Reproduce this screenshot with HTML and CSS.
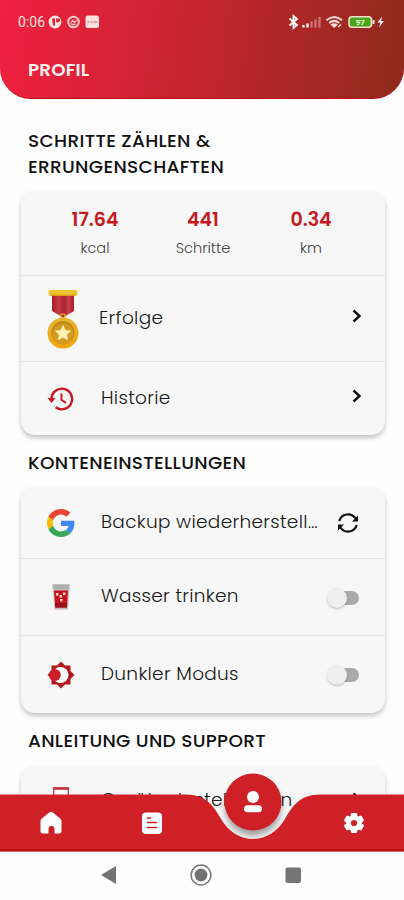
FILE: index.html
```html
<!DOCTYPE html>
<html lang="de">
<head>
<meta charset="utf-8">
<title>Profil</title>
<link rel="stylesheet" href="styles.css">
</head>
<body>
<div class="phone">
  <header class="header">
    <div class="status">
      <span class="clock">0:06</span>
      <svg class="notes" width="54" height="16" viewBox="0 0 54 16">
        <circle cx="7" cy="8" r="6.4" fill="#ffe6e4"/><path d="M4 4.500h3v7H5zM8 4.500h3.500a2 2 0 0 1-3.500 3z" fill="#df2436"/>
        <circle cx="25.500" cy="8" r="5.300" fill="none" stroke="#fbc9c8" stroke-width="2"/><path d="M22.500 9.500l2-3 2 2 2-2M23.500 10.500h4" fill="none" stroke="#fbc9c8" stroke-width="1.300"/>
        <rect x="37.500" y="1.500" width="13.500" height="12.500" rx="2" fill="#fde0df"/><path d="M39.500 8h2m1 0h2m1 0h3.500" stroke="#e0a0a2" stroke-width="2"/>
      </svg>
      <svg class="signals" width="98" height="16" viewBox="0 0 98 16">
        <path d="M1.500 4.500l7.500 6.500L5.500 14V2L9 5l-7.500 6.500" fill="none" stroke="#fff" stroke-width="1.800"/>
        <path d="M15.500 13.500v-2.500M19.500 13.500V9.500" stroke="#fff" stroke-width="2.300"/>
        <path d="M23.500 13.500V7.500M27.500 13.500V5.500M31.500 13.500V3" stroke="#cf7774" stroke-width="2.300"/>
        <g fill="none" stroke="#ffdedb" stroke-width="2"><path d="M38.500 6.200q7.500-6.500 15.500 0M41.200 9q5-4.200 10 0"/></g>
        <path d="M42.500 10.500q3.800-2.600 7.400 0L46.200 14z" fill="#ffdedb"/><path d="M50 13l3-2.500" stroke="#ffdedb" stroke-width="1.500"/>
        <rect x="61" y="2.800" width="22.500" height="10.400" rx="3" fill="#4da51c" stroke="#f4dfd0" stroke-width="1.600"/>
        <path d="M85.500 6v4" stroke="#f4dfd0" stroke-width="2"/>
        <text class="battery" x="72.300" y="10.900" text-anchor="middle">97</text>
        <path d="M94 2.500l-4.500 6h3L91 13.500l5-6.500h-3z" fill="#fff"/>
      </svg>
    </div>
    <h1 class="title">PROFIL</h1>
  </header>

  <main class="content">
    <h2 class="heading">SCHRITTE ZÄHLEN &amp;<br>ERRUNGENSCHAFTEN</h2>
    <section class="card card-steps">
      <div class="stats">
        <div class="stat"><b>17.64</b><span>kcal</span></div>
        <div class="stat"><b>441</b><span>Schritte</span></div>
        <div class="stat"><b>0.34</b><span>km</span></div>
      </div>
      <div class="row row-award">
        <svg class="medal" width="32" height="60" viewBox="0 0 32 60">
          <defs>
            <linearGradient id="gold" x2="0" y2="1"><stop stop-color="#e3b637"/><stop offset="1" stop-color="#f2a40b"/></linearGradient>
            <linearGradient id="ribbon"><stop stop-color="#a71d2c"/><stop offset=".3" stop-color="#c93b43"/><stop offset=".55" stop-color="#a82330"/><stop offset=".75" stop-color="#cc3e46"/><stop offset="1" stop-color="#a51d2b"/></linearGradient>
          </defs>
          <path d="M5 4h22v18l-11 6.500L5 22z" fill="url(#ribbon)"/>
          <rect x="1.500" y="1" width="29" height="6" rx="2.500" fill="#efc331"/><path d="M4 6.200h24" stroke="#d99d17" stroke-width="1.400"/>
          <circle cx="16" cy="27" r="2" fill="none" stroke="#dca821" stroke-width="1.500"/>
          <circle cx="16" cy="44" r="15.500" fill="url(#gold)"/>
          <circle cx="16" cy="43.700" r="11.500" fill="#be8414"/><circle cx="16" cy="44.800" r="10.600" fill="#d29a22"/>
          <path d="M16 36.500l2.300 4.800 5.300.7-3.900 3.600 1 5.200-4.700-2.500-4.700 2.500 1-5.200-3.900-3.600 5.300-.7z" fill="#fff3b4" stroke="#fff3b4" stroke-width=".6"/>
        </svg>
        <span class="label">Erfolge</span>
        <svg class="chev" width="12" height="16" viewBox="0 0 12 16"><path d="M2.500 2.500L8.500 8l-6 5.500"/></svg>
      </div>
      <div class="row row-history">
        <svg class="icon" width="28" height="26" viewBox="0 0 28 26">
          <path d="M4.500 13a10.300 10.300 0 1 1 4.200 8.300" fill="none" stroke="#ca1823" stroke-width="2.400"/><path d="M.5 12h8l-4 5z" fill="#ca1823"/><path d="M14.500 7.500v6.300l4.500 3" fill="none" stroke="#ca1823" stroke-width="2"/>
        </svg>
        <span class="label">Historie</span>
        <svg class="chev" width="12" height="16" viewBox="0 0 12 16"><path d="M2.500 2.500L8.500 8l-6 5.500"/></svg>
      </div>
    </section>

    <h2 class="heading h-account">KONTENEINSTELLUNGEN</h2>
    <section class="card card-account">
      <div class="row row-backup">
        <svg class="icon google" width="28" height="28" viewBox="0 0 48 48">
          <path fill="#ea4335" d="M24 9.500c3.540 0 6.710 1.220 9.210 3.600l6.850-6.850C35.900 2.380 30.470 0 24 0 14.620 0 6.510 5.380 2.560 13.220l7.980 6.190C12.430 13.720 17.740 9.500 24 9.500z"/>
          <path fill="#4285f4" d="M46.980 24.550c0-1.570-.15-3.090-.38-4.550H24v9.020h12.940c-.58 2.960-2.260 5.480-4.780 7.180l7.730 6c4.510-4.180 7.090-10.360 7.090-17.650z"/>
          <path fill="#fbbc05" d="M10.530 28.590c-.48-1.450-.76-2.990-.76-4.590s.27-3.140.76-4.590l-7.980-6.190C.92 16.460 0 20.120 0 24s.92 7.540 2.560 10.780z"/>
          <path fill="#34a853" d="M24 48c6.480 0 11.930-2.130 15.890-5.810l-7.730-6c-2.150 1.450-4.920 2.300-8.160 2.300-6.260 0-11.570-4.220-13.470-9.910l-7.980 6.190C6.510 42.620 14.620 48 24 48z"/>
        </svg>
        <span class="label">Backup wiederherstell…</span>
        <svg class="sync" width="24" height="22" viewBox="0 0 24 22">
          <path d="M3.300 9A9 9 0 0 1 19.500 6.500M20.700 13A9 9 0 0 1 4.500 15.500" fill="none" stroke="#111" stroke-width="2.200"/><path d="M22 3.500v6h-6zM2 18.500v-6h6z" fill="#111"/>
        </svg>
      </div>
      <div class="row row-water">
        <svg class="icon" width="28" height="28" viewBox="0 0 28 28">
          <path d="M5.500 1.500h17l-1.500 25H7.500z" fill="#c7b9b8"/><path d="M5.500 1.500h17l-.3 4.500H5.800z" fill="#aeb0ae"/><path d="M7 7.500h14l-1.100 17H8.300z" fill="#c8131f"/><path d="M8 20h12.200l-.3 4.500H8.300z" fill="#99131a"/>
          <path d="M9 10h2.500v2.500H9zM16 9.500h2.500V12H16zM12.500 12H15v2.500h-2.500zM13 16h2.500v2.500H13z" fill="#f9d5d5"/>
        </svg>
        <span class="label">Wasser trinken</span>
        <span class="switch"></span>
      </div>
      <div class="row row-dark">
        <svg class="icon" width="28" height="28" viewBox="0 0 28 28">
          <path d="M14 .5l4 4h5.500V10l4 4-4 4v5.500H18l-4 4-4-4H4.500V18l-4-4 4-4V4.500H10z" fill="#b31720"/>
          <circle cx="13.500" cy="14" r="8" fill="#fff"/>
          <circle cx="7.800" cy="14" r="6" fill="#cf1c2a"/>
        </svg>
        <span class="label">Dunkler Modus</span>
        <span class="switch"></span>
      </div>
    </section>

    <h2 class="heading h-support">ANLEITUNG UND SUPPORT</h2>
    <section class="card card-support">
      <div class="row row-device">
        <svg class="icon" width="28" height="30" viewBox="0 0 28 30"><rect x="6.700" y="2" width="14.600" height="25" rx="1" fill="#fff" stroke="#c8424a" stroke-width="1.400"/><path d="M6 2.500h16" stroke="#c8303a" stroke-width="2.500"/></svg>
        <span class="label">Geräteeinstellungen</span>
        <svg class="chev" width="12" height="16" viewBox="0 0 12 16"><path d="M2.500 2.500L8.500 8l-6 5.500"/></svg>
      </div>
    </section>
  </main>

  <nav class="tabs">
    <svg class="tabs-shape" width="404" height="92" viewBox="0 0 404 92">
      <defs><filter id="soft" x="-30%" y="-30%" width="160%" height="160%"><feGaussianBlur stdDeviation="3"/></filter>
      <clipPath id="notch"><path d="M186 0H320V34.500C300 34.500 291 46 285.500 58 270 86 236 86 220.500 58 215 46 206 34.500 186 34.500z"/></clipPath></defs>
      <circle cx="253" cy="48" r="28" fill="#000" opacity=".35" filter="url(#soft)" clip-path="url(#notch)"/>
      <path d="M0 34.500H186C206 34.500 213.500 46 220.500 58 236 86 270 86 285.500 58 292.500 46 300 34.500 320 34.500H404V91.500H0z" fill="#cf2027"/>
      <path d="M0 90.300H404" stroke="#b50b0d" stroke-width="2"/>
      <circle cx="253" cy="42" r="28.500" fill="#cf2027"/>
    </svg>
    <div class="tab-items">
      <svg width="24" height="24" viewBox="0 0 24 24"><path d="M10.300 1.600a2.500 2.500 0 0 1 3.400 0l7.800 6.200q1 1 1 2.200V20a2.500 2.500 0 0 1-2.500 2.500h-4.500V18a2.700 2.700 0 0 0-6 0v4.500H4A2.500 2.500 0 0 1 1.500 20V10q0-1.300 1-2.200z" fill="#fff"/></svg>
      <svg width="24" height="24" viewBox="0 0 24 24"><rect x="2" y="1.500" width="20" height="21.500" rx="4" fill="#fff"/><path d="M7.500 7h3M7.500 11.500h9M7.500 16.500h9" stroke="#cf2027" stroke-width="1.700" stroke-linecap="round"/></svg>
      <svg class="person" width="24" height="24" viewBox="0 0 24 24"><circle cx="12" cy="7" r="6" fill="#fff"/><rect x="3" y="15.300" width="18" height="7" rx="3.500" fill="#fff"/></svg>
      <svg width="24" height="24" viewBox="0 0 24 24"><path fill="#fff" stroke="#fff" stroke-width="2.400" stroke-linejoin="round" fill-rule="evenodd" d="M19.400 13a7.500 7.500 0 0 0 0-2l2.100-1.700-2-3.500-2.600 1a7.500 7.500 0 0 0-1.700-1l-.4-2.700h-4l-.4 2.700a7.500 7.500 0 0 0-1.700 1l-2.600-1-2 3.500L6.200 11a7.500 7.500 0 0 0 0 2l-2.100 1.700 2 3.500 2.600-1a7.500 7.500 0 0 0 1.700 1l.4 2.700h4l.4-2.700a7.500 7.500 0 0 0 1.700-1l2.600 1 2-3.500zM12.800 7.700a4.300 4.300 0 1 1 0 8.600 4.300 4.300 0 0 1 0-8.600z" transform="translate(-.8 0)"/></svg>
    </div>
  </nav>
  <footer class="system">
    <svg width="18" height="22" viewBox="0 0 18 22"><path d="M2 11L17 2v18z" fill="#737373"/></svg>
    <svg width="22" height="22" viewBox="0 0 22 22"><circle cx="11" cy="11" r="9.900" fill="none" stroke="#777" stroke-width="1.500"/><circle cx="11" cy="11" r="6.400" fill="#737373"/></svg>
    <svg width="18" height="22" viewBox="0 0 18 22"><rect x=".5" y="3.500" width="15.500" height="15.500" rx="2" fill="#757575"/></svg>
  </footer>
</div>
</body>
</html>
```
FILE: styles.css
```css
* { box-sizing: border-box; }
body { margin: 0; background: #fefefe; font-family: Poppins, Inter, "Liberation Sans", sans-serif; }
svg { display: block; flex: none; }
.phone { position: relative; width: 404px; height: 900px; overflow: hidden; display: flex; flex-direction: column; background: #fefefe; }
.header { height: 99px; flex: none; border-radius: 0 0 31px 31px; background: linear-gradient(97deg, #f0203e 0%, #c3252e 50%, #8e2a1c 100%); border-bottom: 1px solid #b90d12; color: #fff; }
.status { display: flex; align-items: center; height: 16px; margin: 14px 18px 0; }
.clock { width: 30px; font: 400 14px/16px Roboto, sans-serif; color: #ffe3e1; }
.signals { margin-left: auto; }
.battery { font: 700 8px Roboto, sans-serif; fill: #e8ffdc; }
.title { margin: 28px 0 0 28px; font-size: 18.3px; line-height: 23px; font-weight: 600; letter-spacing: .15px; color: #fff0ee; }
.content { flex: 1; min-height: 0; overflow: hidden; padding: 29px 19px 0 21px; }
.heading { margin: 0 0 0 7px; font-size: 18.5px; font-weight: 500; letter-spacing: .32px; line-height: 26px; color: #111; white-space: nowrap; }
.card { background: #f7f7f7; border-radius: 14px; box-shadow: 0 3px 5px rgba(0,0,0,.23); overflow: hidden; }
.card-steps { height: 244px; margin-top: 11px; }
.stats { height: 84px; display: grid; grid-template-columns: repeat(3, 108px); padding: 18px 0 0 20px; }
.stat { display: flex; flex-direction: column; align-items: center; }
.stat b { font-size: 19px; line-height: 22px; font-weight: 600; color: #c41922; }
.stat span { font-size: 14.6px; line-height: 20px; margin-top: 7px; font-weight: 300; color: #444; }
.row { display: flex; align-items: center; border-top: 1.500px solid #e3e5e5; padding: 0 22px 0 26px; }
.row-award { height: 86px; }
.row-history { height: 74px; }
.row-backup { height: 71px; border-top: 0; }
.row-water { height: 77px; }
.row-dark { height: 78px; }
.row-device { height: 70px; border-top: 0; }
.icon { margin-right: 26px; }
.medal { margin-right: 20px; }
.label { font-size: 18.5px; line-height: 24px; margin-top: -2px; font-weight: 300; letter-spacing: .3px; color: #181818; white-space: nowrap; }
.chev, .sync, .switch { margin-left: auto; }
.chev { margin-top: -5px; }
.sync { margin-right: 3px; }
.chev path { fill: none; stroke: #111; stroke-width: 2.400; }
.switch { position: relative; width: 26px; height: 14px; border-radius: 7px; background: #aaa; margin-right: 4px; margin-top: 1px; }
.switch::before { content: ""; position: absolute; left: -6px; top: -3px; width: 20px; height: 20px; border-radius: 50%; background: #efefef; box-shadow: 0 1px 2px rgba(0,0,0,.25); }
.h-account { margin-top: 15px; }
.card-account { height: 226px; margin-top: 11px; }
.h-support { margin-top: 15px; }
.card-support { height: 90px; margin-top: 12px; }
.tabs { position: absolute; left: 0; top: 760px; width: 404px; height: 92px; }
.tab-items { position: absolute; inset: 51px 0 auto; display: grid; grid-template-columns: repeat(4, 101px); justify-items: center; }
.person { position: relative; top: -21px; }
.system { height: 49px; flex: none; display: flex; align-items: center; justify-content: center; gap: 73px; padding: 0 2px 1px 0; background: #fefefe; }
```
